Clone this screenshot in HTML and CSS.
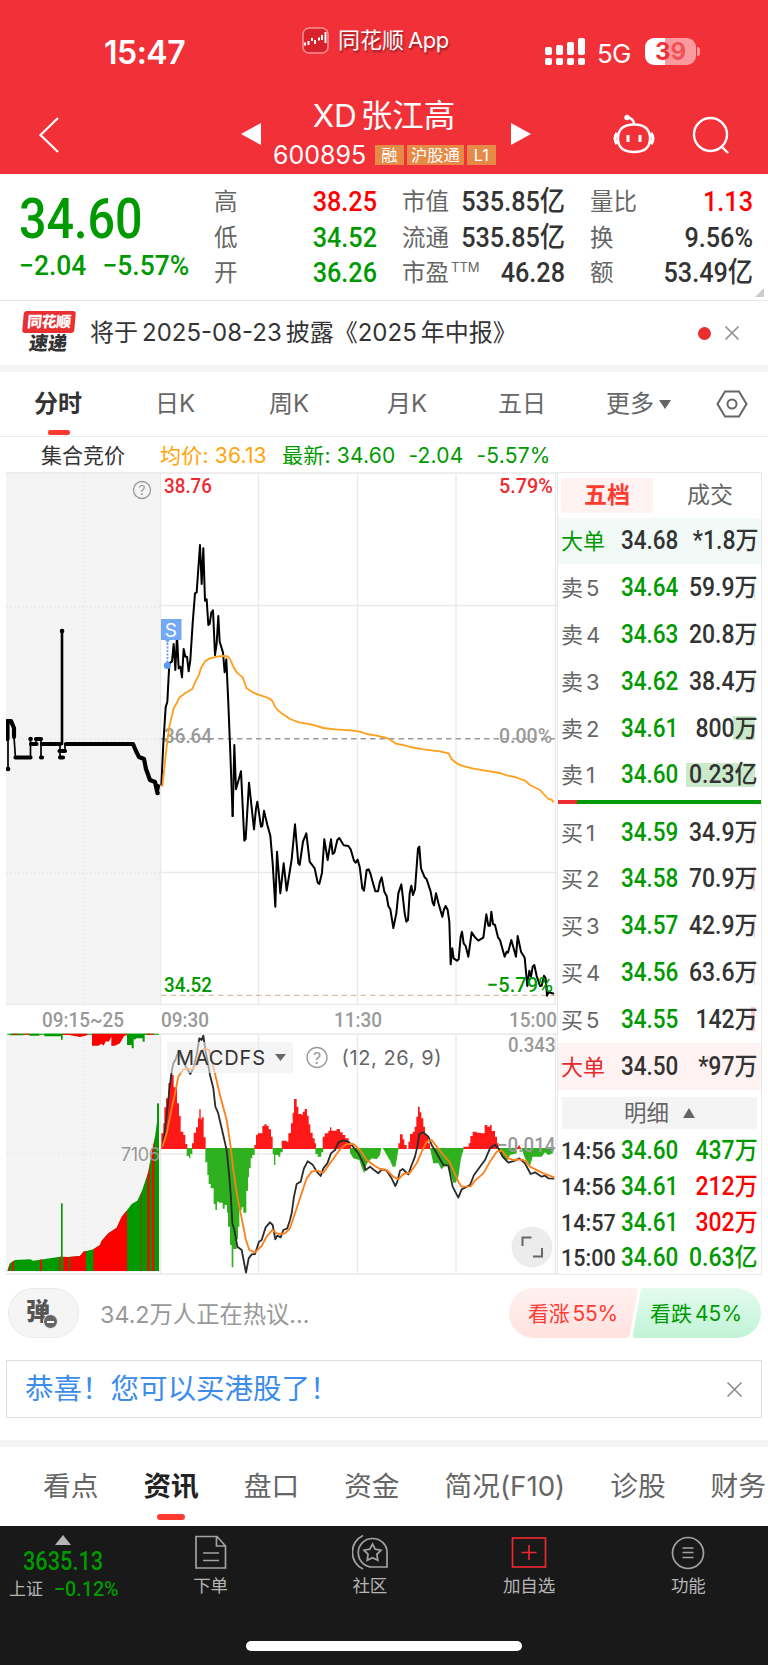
FILE: index.html
```html
<!DOCTYPE html>
<html lang="zh-CN">
<head>
    <meta charset="UTF-8">
    <meta name="viewport" content="width=device-width, initial-scale=1.0">
    <title>XD张江高 600895</title>
    <link rel="stylesheet" href="styles.css">
</head>
<body>
    <!-- Header -->
    <header class="header">
        <div class="status-bar">
            <span class="clock">15:47</span>
            <div class="app-name">
                <svg width="27" height="27" viewBox="0 0 27 27">
                    <rect x="1" y="1" width="25" height="25" rx="6" fill="#d8212a" stroke="#f98e92" stroke-width="1.6"/>
                    <path d="M3 15.500v3M6.500 14v4M10 11v3M13 13v4M17 10.500v3M20 8v5M23.500 5v11" stroke="#fff" stroke-width="2"/>
                </svg>
                <span>同花顺<i>App</i></span>
            </div>
            <div class="phone-state">
                <svg width="40" height="28" viewBox="0 0 40 28" fill="#fff">
                    <rect x="0" y="9" width="7" height="8" rx="2"/><rect x="11" y="7" width="7" height="10" rx="2"/>
                    <rect x="22" y="4" width="7" height="13" rx="2"/><rect x="33" y="0" width="7" height="17" rx="2"/>
                    <rect x="0" y="20" width="7" height="7" rx="2"/><rect x="11" y="20" width="7" height="7" rx="2"/>
                    <rect x="22" y="20" width="7" height="7" rx="2"/><rect x="33" y="20" width="7" height="7" rx="2"/>
                </svg>
                <span class="net">5G</span>
                <div class="battery"><b>3</b><b class="low">9</b></div>
                <i class="battery-tip"></i>
            </div>
        </div>
        <div class="title-bar">
            <svg class="back" width="22" height="38" viewBox="0 0 22 38" fill="none" stroke="#fff" stroke-width="2.2"><path d="M20 2L2.500 19L20 36"/></svg>
            <svg class="prev" width="20" height="22"><path d="M0 11L20 0V22z" fill="#fff"/></svg>
            <div class="stock">
                <h1><i>XD</i>张江高</h1>
                <div class="code-row">
                    <span class="code">600895</span>
                    <span class="tag">融</span><span class="tag">沪股通</span><span class="tag">L1</span>
                </div>
            </div>
            <svg class="next" width="20" height="22"><path d="M20 11L0 0V22z" fill="#fff"/></svg>
            <svg class="robot" width="42" height="40" viewBox="0 0 42 40" fill="none" stroke="#fff" stroke-width="2.4">
                <path d="M21 10.500C31 10.500 37 15 37 24.500S31 38 21 38S5 34 5 24.500S11 10.500 21 10.500z"/>
                <path d="M21 10.500C21 6 18.500 4 14 3.500"/><circle cx="14" cy="3.500" r="1.500" fill="#fff"/>
                <path d="M4 19Q0 24.500 4 30M38 19Q42 24.500 38 30M15 21v7M27 21v7" stroke-width="3"/>
            </svg>
            <svg class="search" width="38" height="38" viewBox="0 0 38 38" fill="none" stroke="#fff" stroke-width="2.4"><circle cx="18.500" cy="18.500" r="16.500"/><path d="M29 30L36 37"/></svg>
        </div>
    </header>

    <!-- Quote summary -->
    <section class="quote">
        <div class="last">
            <div class="price num">34.60</div>
            <div class="change num"><span>−2.04</span><span>−5.57%</span></div>
        </div>
        <dl><dt>高</dt><dd class="num up">38.25</dd><dt>低</dt><dd class="num down">34.52</dd><dt>开</dt><dd class="num down">36.26</dd></dl>
        <dl><dt>市值</dt><dd class="num">535.85亿</dd><dt>流通</dt><dd class="num">535.85亿</dd><dt>市盈<sup>TTM</sup></dt><dd class="num">46.28</dd></dl>
        <dl><dt>量比</dt><dd class="num up">1.13</dd><dt>换</dt><dd class="num">9.56%</dd><dt>额</dt><dd class="num">53.49亿</dd></dl>
        <i class="corner"></i>
    </section>

    <section class="notice">
        <div class="express"><span class="express-top">同花顺</span><span class="express-bottom">速递</span></div>
        <p>将于<i>2025-08-23</i>披露《<i>2025</i>年中报》</p>
        <i class="dot"></i>
        <svg width="14" height="14" viewBox="0 0 14 14" stroke="#999" stroke-width="1.700"><path d="M.5 .5L13.500 13.500M13.500 .5L.5 13.500"/></svg>
    </section>

    <nav class="period">
        <span class="t1 active">分时</span><span class="t2">日K</span><span class="t3">周K</span><span class="t4">月K</span><span class="t5">五日</span><span class="t6">更多</span>
        <svg class="caret" width="12" height="9"><path d="M0 0H12L6 9z" fill="#666"/></svg>
        <svg class="hexagon" width="32" height="28" viewBox="0 0 32 28" fill="none" stroke="#666" stroke-width="2"><path d="M9 1.500H23L30.500 14L23 26.500H9L1.500 14z"/><circle cx="16" cy="14" r="4.500"/></svg>
    </nav>

    <div class="legend">
        <span class="auction">集合竞价</span><span class="avg">均价: 36.13</span><span class="now">最新: 34.60</span><span class="now">-2.04</span><span class="now">-5.57%</span>
    </div>

    <main class="board">
        <div class="charts">
            <!-- Intraday price -->
            <svg class="price-chart" width="551" height="533" viewBox="6 472 551 533">
                <rect x="6" y="472" width="154" height="533" fill="#f4f4f4"/>
                <path d="M84 473V1005M6 607H160M6 739H160M6 873H160" stroke="#e9e9e9" stroke-width="1.500" stroke-dasharray="2 2"/>
                <path d="M6 473H557M160.500 473V1005M258.500 473V1005M357.500 473V1005M456 473V1005M555.500 473V1005M160 605.500H557M160 872.500H557M6 1004.500H557" stroke="#e9e9e9" stroke-width="1.300"/>
                <path d="M161 738.700H555" stroke="#999" stroke-width="1.500" stroke-dasharray="5.500 4"/>
                <path d="M161 995.300H555" stroke="#dcbd9c" stroke-width="1.200" stroke-dasharray="5.500 4"/>
                <g class="label" font-size="21">
                    <text x="164" y="493" fill="#ee2b33" textLength="48" lengthAdjust="spacingAndGlyphs">38.76</text>
                    <text x="499" y="493" fill="#ee2b33" textLength="54" lengthAdjust="spacingAndGlyphs">5.79%</text>
                    <text x="164" y="742.500" fill="#999" textLength="48" lengthAdjust="spacingAndGlyphs">36.64</text>
                    <text x="499" y="742.500" fill="#999" textLength="53" lengthAdjust="spacingAndGlyphs">0.00%</text>
                </g>
                <g fill="none" stroke="#000" stroke-linejoin="round" stroke-linecap="round">
                    <path d="M8 769V721L14 727V737L15.500 758M30.500 758V738M36 744V739M41 739V758M60 744V758M65 751V744" stroke-width="1.700"/>
                    <path d="M62 631V744" stroke-width="2.600"/>
                    <path d="M7.500 739V721H11L14 728V737M15.500 757.500H30.500M31 744H36.500M36 739H41M41 757.500H42M42 744H60M59.500 751H65M60 757.500H63M66 744H133L136 751L139 757L144 759L146 769L150 780L155 782L157 791L158 786" stroke-width="4.200"/>
                    <path d="M8 769h.1M62 631h.1M157.500 793h.1M30.500 739h.1" stroke-width="4.500"/>
                </g>
                <g fill="none" stroke="#000" stroke-width="6" stroke-linejoin="round">
                    <polyline transform="translate(0 470) scale(.33333)" points="484,947 490,820 497,712 502,695 508,580 516,574 521,522 526,600 531,497 536,595 541,590 546,622 551,537 556,560 561,560 566,604 571,570 578,460 585,370 590,367 600,225 605,342 610,235 615,392 620,388 625,465 629,462 634,427 639,421 645,555 650,520 655,438 659,515 669,548 674,607 679,568 685,700 691,850 698,1040"/>
                    <polyline transform="translate(150 700) scale(.33333)" points="248,350 253,135 258,268 273,214 283,422 287,417 297,248 312,388 318,325 322,305 333,380 337,378 342,332 352,375 361,407 368,490 376,620 381,455 391,580 401,490 410,572 420,510 425,478 435,373 445,490 449,495 459,425 469,400 479,485 494,505 503,548 508,552 516,518 523,418 533,480 543,418 548,462 553,458 562,420 568,414 581,436 595,438 602,448 612,482 617,488 623,479 629,500 637,565 642,572 650,510 656,508 661,520 667,542 676,574 684,574 690,545 695,532 703,575 710,588 715,618 721,628 730,684 739,640 745,580 754,553 759,595 764,640 769,665 774,660 779,580 784,557 789,585 795,568 804,445 808,440 813,505 824,532 830,538 842,575 848,608 852,616 858,580 866,612 877,650 882,628 887,618 893,630 898,665 902,793 907,745 911,775 921,782 926,778 932,710 936,695 941,730 947,738 955,770 965,697 975,712 985,722 1000,713 1009,643 1015,677 1020,677 1024,635 1029,672 1035,675 1044,712 1050,720 1064,770 1070,755 1074,758 1084,720 1098,770 1103,708 1113,755 1124,773 1132,858 1138,812 1143,830 1148,800 1153,795 1160,828 1170,858 1175,857 1182,827 1187,835 1191,887 1196,877 1212,881"/>
                </g>
                <g fill="none" stroke="#ff9f1c" stroke-width="5.500" stroke-linejoin="round">
                    <polyline transform="translate(0 470) scale(.33333)" points="487,950 500,830 508,770 521,715 530,700 537,684 555,670 577,657 586,635 596,617 604,592 616,573 630,565 650,560 668,558 683,559 690,567 700,590 710,607 728,622 740,655 760,668 775,674 800,682 812,688 818,695 828,715"/>
                    <polyline transform="translate(150 700) scale(.33333)" points="378,25 395,40 420,57 447,67 487,74 520,84 555,88 600,91 630,95 650,102 680,107 710,114 722,120 738,131 765,136 780,141 820,148 870,154 896,160 905,178 920,190 935,197 970,206 1000,211 1050,219 1070,226 1095,231 1125,242 1140,255 1170,270 1195,297 1205,299 1211,307"/>
                </g>
                <g class="label" font-size="21" fill="#009a00">
                    <text x="164" y="992" textLength="48" lengthAdjust="spacingAndGlyphs">34.52</text>
                    <text x="487" y="992" textLength="66" lengthAdjust="spacingAndGlyphs">−5.79%</text>
                </g>
                <g class="sans">
                    <circle cx="142" cy="490" r="8.500" fill="none" stroke="#999" stroke-width="1.300"/>
                    <text x="142" y="495" font-size="13.500" fill="#999" text-anchor="middle">?</text>
                    <path d="M161 619H181.500V640H170L167.500 643L165 640H161z" fill="#73a9f3"/>
                    <path d="M167.500 643V662" stroke="#5a9bf4" stroke-width="1.800" stroke-dasharray="2 1.500"/>
                    <circle cx="167.300" cy="665.500" r="3.500" fill="#5a9bf4"/>
                    <text x="170.800" y="636.500" font-size="19" fill="#fff" text-anchor="middle">S</text>
                </g>
            </svg>
            <div class="times"><span class="pre">09:15~25</span><span class="open">09:30</span><span class="noon">11:30</span><span class="end">15:00</span></div>
            <!-- Auction volume and MACD -->
            <svg class="macd-chart" width="551" height="242" viewBox="6 1033 551 242">
                <rect x="6" y="1033" width="154" height="239" fill="#f4f4f4"/>
                <path d="M84 1034V1271M6 1153.500H160" stroke="#e9e9e9" stroke-width="1.500" stroke-dasharray="2 2"/>
                <path d="M160 1034H557M160.500 1034V1274M258.500 1034V1274M357.500 1034V1274M456 1034V1274M555.500 1034V1274M160 1154H557M6 1274H557" stroke="#e9e9e9" stroke-width="1.300"/>
                <g transform="translate(0 1000) scale(.33333)">
                    <clipPath id="volume"><path d="M22 813L30 790L45 780L90 778L100 782L180 770L205 771L240 768L250 755L280 748L300 735L305 722L325 700L350 683L365 650L380 632L395 612L412 602L425 575L435 545L445 515L455 460L465 410L471 365V310H477V813z"/></clipPath>
                    <g clip-path="url(#volume)">
                        <rect x="20" y="300" width="460" height="520" fill="#009a00"/>
                        <path d="M36 300h5v520h-5zM120 300h6v520h-6zM178 300h4v520h-4zM190 300h15v520h-15zM211 300h47v520h-47zM280 300h101v520h-101zM442 300h7v520h-7zM456 300h7v520h-7z" fill="#fe0000"/>
                        <path d="M205 300h6v520h-6zM421 300h4v520h-4zM22 300h8v520h-8z" fill="#7a4a00"/>
                    </g>
                    <path d="M183 610H188V813H183z" fill="#009a00"/>
                    <path d="M22 101H477V104H22z" fill="#009a00"/>
                    <path d="M30 101h40v5h-40zM88 101h30v6h-30zM133 101h50v8h-50zM183 101h5v18h-5zM381 101V135H395V145H401V118H408V115H428V125H434V104H450V101z" fill="#009a00"/>
                    <path d="M38 101h15v3h-15zM70 101h18v3h-18zM188 101h25v4h-25zM210 101H262V106L240 111L225 108L210 106zM276 101H381V105L372 108L360 130L345 137H334V110L326 125L318 124L310 137L305 131L295 137H276zM440 101h22v3h-22z" fill="#fe0000"/>
                    <g fill="#ff1818">
                        <path d="M484 447V400H490V370H493V322H498V295H505V250H511V225H521V222V262H531V310H537V348H542V395H550V405H556V432H562V447zM576 447V430H581V398H588V382H594V355H598V328H602V358H605V352H611V412H617V447zM763 447V435H768V405H773V400H787V378H793V373H800V378H806V388H813V410H818V447zM845 447V422H860V425H865V400H870V398H873V370H878V338H882V297H890V320H895V342H905V345H908V335H914V327H921V347H926V373H931V398H938V415H944V430H948V447zM968 447V410H974V400H985V392H990V382H994V392H1010V387H1020V397H1028V405H1036V415H1046V430H1053V447zM1195 447V430H1200V403H1208V418H1213V435H1220V447zM1225 447V425H1230V402H1238V395H1244V380H1249V350H1254V320H1259V337H1264V355H1270V380H1275V405H1284V430H1290V447zM1390 447V440H1406V430H1411V408H1418V395H1430V398H1443V400H1454V375H1462V380H1470V375H1475V393H1485V410H1491V430H1496V447zM1550 447L1557 434L1564 447z"/>
                    </g>
                    <g fill="#2fb01f">
                        <path d="M560 444V468H567V475H571V462H577V444zM616 444V487H622V525H626V552H632V565H641V612H646V630H651V605H657V608H668V626H674V615H681V638H684V680H690V735H695V802H700V747H710V718H714V680H718V630H725V622H730V638H739V572H744V532H747V505H752V475H757V465H764V444zM818 444V463H822V495H826V465H835V470H841V457H848V444zM946 444V462H953V470H964V457H970V444zM1050 444V458L1060 475L1078 480L1086 505L1093 520L1100 492L1115 475L1130 478L1140 465L1144 444zM1148 444L1160 464L1172 485L1178 500H1186L1190 480L1196 444zM1290 444L1300 490H1315L1324 508L1335 498H1345L1360 548H1367L1375 530L1383 475L1392 444zM1496 444L1505 470L1520 485L1530 465L1550 460V444zM1564 444L1575 475L1590 498L1598 470H1625L1635 457L1645 465L1658 460L1663 444z"/>
                    </g>
                    <polyline fill="none" stroke="#2c2c2c" stroke-width="5.500" stroke-linejoin="round" points="487,440 495,390 502,330 508,270 515,215 520,190 526,180 535,155 548,180 560,205 571,222 580,205 590,165 598,115 605,120 610,107 616,150 622,180 630,225 640,265 646,320 654,338 665,385 680,450 687,520 692,580 697,670 703,690 712,740 725,750 738,818 746,775 755,763 765,762 777,725 785,720 797,682 810,667 818,675 826,718 832,707 842,712 850,690 862,685 870,660 875,640 882,590 890,552 902,545 912,505 923,484 938,494 950,515 962,528 970,505 982,490 993,460 1005,450 1015,428 1028,421 1045,425 1055,435 1075,460 1090,490 1097,510 1110,500 1122,510 1135,520 1145,508 1160,512 1175,535 1186,558 1192,545 1200,512 1208,507 1225,523 1235,495 1245,470 1252,440 1258,402 1270,397 1285,410 1295,435 1310,460 1330,495 1345,497 1358,560 1375,593 1385,568 1410,555 1422,525 1440,500 1455,480 1470,445 1485,434 1495,445 1508,470 1525,488 1545,482 1558,475 1575,490 1592,522 1605,517 1625,530 1635,527 1645,535 1663,536"/>
                    <polyline fill="none" stroke="#ff7f1a" stroke-width="5.500" stroke-linejoin="round" points="487,440 500,400 512,340 525,280 535,230 548,210 558,205 575,209 587,195 600,155 615,145 627,150 640,200 660,285 680,360 692,440 700,510 712,590 725,655 738,720 748,750 765,757 785,738 800,710 817,690 830,700 843,702 855,700 870,685 885,640 905,580 920,535 935,515 950,512 970,518 990,490 1020,448 1040,432 1060,432 1080,450 1100,480 1125,498 1140,507 1160,510 1180,530 1195,538 1210,522 1230,518 1250,490 1265,455 1280,425 1295,420 1310,440 1330,465 1348,485 1360,510 1375,545 1385,560 1412,559 1425,542 1450,520 1470,485 1490,455 1505,452 1525,475 1540,480 1560,478 1575,482 1590,500 1630,520 1663,532"/>
                </g>
                <rect x="167" y="1042" width="126" height="31" rx="2" fill="#efefef" fill-opacity=".6"/>
                <g class="sans">
                    <text x="121" y="1161" font-size="18" fill="#999" textLength="39">7106</text>
                    <text x="176" y="1064.500" font-size="20" fill="#333" textLength="89">MACDFS</text>
                    <path d="M275 1054H286L280.500 1061z" fill="#666"/>
                    <circle cx="317" cy="1057.500" r="10" fill="none" stroke="#999" stroke-width="1.300"/>
                    <text x="317" y="1063.500" font-size="16" fill="#999" text-anchor="middle">?</text>
                    <text x="341.500" y="1064.500" font-size="20" fill="#666" textLength="100">(12, 26, 9)</text>
                </g>
                <g class="label" font-size="20.500" fill="#999">
                    <text x="508" y="1052" textLength="47.500" lengthAdjust="spacingAndGlyphs">0.343</text>
                    <text x="497" y="1152" textLength="58.500" lengthAdjust="spacingAndGlyphs">−0.014</text>
                </g>
                <circle cx="532" cy="1247" r="20.500" fill="#ececec"/>
                <path d="M522.500 1246V1237.500H531.500M533 1256.500H542V1248" fill="none" stroke="#666" stroke-width="2"/>
            </svg>
        </div>

        <!-- Order book -->
        <aside class="book">
            <div class="book-tabs"><span class="on">五档</span><span>成交</span></div>
            <div class="row big sell"><span>大单</span><b class="num">34.68</b><b class="num vol">*1.8万</b></div>
            <div class="row s1"><span>卖5</span><b class="num">34.64</b><b class="num vol">59.9万</b></div>
            <div class="row s1"><span>卖4</span><b class="num">34.63</b><b class="num vol">20.8万</b></div>
            <div class="row s1"><span>卖3</span><b class="num">34.62</b><b class="num vol">38.4万</b></div>
            <div class="row s22"><span>卖2</span><b class="num">34.61</b><b class="num vol">800万</b></div>
            <div class="row s69"><span>卖1</span><b class="num">34.60</b><b class="num vol">0.23亿</b></div>
            <div class="ratio"></div>
            <div class="row b1"><span>买1</span><b class="num">34.59</b><b class="num vol">34.9万</b></div>
            <div class="row b2"><span>买2</span><b class="num">34.58</b><b class="num vol">70.9万</b></div>
            <div class="row b1"><span>买3</span><b class="num">34.57</b><b class="num vol">42.9万</b></div>
            <div class="row b1"><span>买4</span><b class="num">34.56</b><b class="num vol">63.6万</b></div>
            <div class="row b4"><span>买5</span><b class="num">34.55</b><b class="num vol">142万</b></div>
            <div class="row big buy"><span>大单</span><b class="num">34.50</b><b class="num vol">*97万</b></div>
            <div class="detail-head">明细<svg width="12" height="10"><path d="M0 10H12L6 0z" fill="#666"/></svg></div>
            <div class="row tick"><b class="num">14:56</b><b class="num down">34.60</b><b class="num vol down">437万</b></div>
            <div class="row tick"><b class="num">14:56</b><b class="num down">34.61</b><b class="num vol up">212万</b></div>
            <div class="row tick"><b class="num">14:57</b><b class="num down">34.61</b><b class="num vol up">302万</b></div>
            <div class="row tick"><b class="num">15:00</b><b class="num down">34.60</b><b class="num vol down">0.63亿</b></div>
        </aside>
    </main>

    <section class="talk">
        <div class="bullet">弹<i></i></div>
        <p>34.2万人正在热议...</p>
        <div class="votes">
            <svg width="252" height="50" viewBox="0 0 252 50">
                <defs>
                    <linearGradient id="rise" x2="0" y2="1"><stop stop-color="#fff1f0"/><stop offset="1" stop-color="#ffe2df"/></linearGradient>
                    <linearGradient id="fall" x2="0" y2="1"><stop stop-color="#e4fbee"/><stop offset="1" stop-color="#c0f3d6"/></linearGradient>
                </defs>
                <path d="M25 0H125Q129 0 128.500 4L121 46Q120 50 116 50H25A25 25 0 0 1 25 0z" fill="url(#rise)"/>
                <path d="M136 0H227A25 25 0 0 1 227 50H127Q123 50 124 46L131.500 4Q132 0 136 0z" fill="url(#fall)"/>
                <text x="19" y="33" font-size="21" fill="#ff3b35" textLength="90">看涨<tspan dx="3">55%</tspan></text>
                <text x="141" y="33" font-size="21" fill="#009a00" textLength="92">看跌<tspan dx="3">45%</tspan></text>
            </svg>
        </div>
    </section>

    <section class="promo">
        <span>恭喜！您可以买港股了！</span>
        <svg width="15" height="15" viewBox="0 0 15 15" stroke="#888" stroke-width="1.500"><path d="M.5 .5L14.500 14.500M14.500 .5L.5 14.500"/></svg>
    </section>

    <nav class="sections">
        <span>看点</span><span class="active">资讯</span><span>盘口</span><span>资金</span><span>简况(F10)</span><span>诊股</span><span>财务</span>
    </nav>

    <footer class="bottom">
        <div class="menu">
            <div class="index">
                <svg width="16" height="10"><path d="M0 10H16L8 0z" fill="#b5b5b5"/></svg>
                <div class="num points">3635.13</div>
                <div class="index-row"><span>上证</span><b class="num">−0.12%</b></div>
            </div>
            <div class="item">
                <svg width="36" height="36" viewBox="0 0 36 36" fill="none" stroke="#a2a2a2" stroke-width="1.700"><path d="M3 2.500H24L32.500 12V34H3zM23.500 2.500V12H32.500M10 19H26M10 26.500H26"/></svg>
                下单
            </div>
            <div class="item">
                <svg width="36" height="36" viewBox="0 0 36 36" fill="none" stroke="#a2a2a2" stroke-width="1.700"><path d="M20.500 4.500C29 4.500 35 11 35 18V33H20.500A14.200 14.200 0 0 1 20.500 4.500z"/><path d="M11 1.500A18.500 18.500 0 0 0 11 35"/><path d="M20.500 10l2.700 5.200 5.800 1-4.100 4.200.9 5.900-5.300-2.600-5.300 2.600.9-5.900-4.100-4.200 5.800-1z"/></svg>
                社区
            </div>
            <div class="item">
                <svg width="36" height="36" viewBox="0 0 36 36" fill="none" stroke="#e8272f" stroke-width="1.700"><rect x="1.500" y="4" width="33" height="29"/><path d="M18 11V26M10.500 18.500H25.500"/></svg>
                加自选
            </div>
            <div class="item">
                <svg width="36" height="36" viewBox="0 0 36 36" fill="none" stroke="#a2a2a2" stroke-width="1.700"><circle cx="18" cy="19" r="15.500"/><path d="M12.500 14H23.500M12.500 18.500H23.500M12.500 23.500H23.500"/></svg>
                功能
            </div>
        </div>
        <div class="home-bar"></div>
    </footer>
</body>
</html>
```
FILE: styles.css
```css
* {
    box-sizing: border-box;
}
body {
    margin: 0;
    width: 768px;
    height: 1665px;
    overflow: hidden;
    background-color: #fff;
    color: #333;
    font-family: Inter, "Noto Sans CJK SC", sans-serif;
}
h1, p, dl, dd {
    margin: 0;
}
i {
    font-style: normal;
}
svg {
    display: block;
    flex: none;
}
/* narrow numerals */
.num {
    font-family: Roboto, "Noto Sans CJK SC", sans-serif;
    font-weight: 500;
    white-space: nowrap;
    transform: scaleX(0.9);
    transform-origin: left;
}
.label {
    font-family: Roboto, sans-serif;
    font-weight: 500;
}
.sans {
    font-family: Inter, sans-serif;
}
.up {
    color: #fe0000 !important;
}
.down {
    color: #009a00 !important;
}

/* header */
.header {
    height: 174px;
    background-color: #f23037;
    color: #fff;
}
.status-bar {
    height: 105px;
    display: flex;
    align-items: flex-start;
}
.clock {
    width: 198px;
    margin: 34px 0 0 104px;
    font-size: 32px;
    font-weight: 600;
    line-height: 38px;
    letter-spacing: -0.5px;
}
.app-name {
    width: 243px;
    margin-top: 27px;
    display: flex;
    gap: 9px;
    font-size: 22px;
    line-height: 27px;
    text-shadow: 1px 2px 2px rgba(0, 0, 0, 0.4);
}
.app-name i {
    margin-left: 4px;
    letter-spacing: -0.5px;
}
.phone-state {
    margin-top: 38px;
    display: flex;
}
.net {
    width: 46px;
    margin: 2px 0 0 12px;
    font-size: 26px;
    line-height: 27px;
    letter-spacing: -0.8px;
}
.battery {
    width: 51px;
    height: 27px;
    margin-left: 2px;
    border-radius: 9px;
    background: linear-gradient(90deg, #fff 39%, #f99a9e 39%);
    text-align: center;
    color: #f23037;
    font-size: 24px;
    line-height: 28px;
}
.battery .low {
    color: #f35158;
}
.battery-tip {
    width: 3px;
    height: 9px;
    margin: 9px 0 0 1px;
    border-radius: 0 3px 3px 0;
    background-color: #f99a9e;
}
.title-bar {
    height: 69px;
    display: flex;
}
.back {
    margin: 11px 0 0 38px;
}
.prev {
    margin: 18px 0 0 181px;
}
.stock {
    width: 250px;
    margin-top: -9px;
}
h1 {
    padding-right: 4px;
    font-size: 31.500px;
    font-weight: 400;
    line-height: 40px;
    text-align: center;
    white-space: nowrap;
}
h1 i {
    margin-right: 4px;
}
.code-row {
    display: flex;
    align-items: center;
    height: 24px;
    margin: 7px 0 0 12px;
}
.code {
    width: 102px;
    font-size: 25px;
    line-height: 24px;
}
.tag {
    min-width: 29px;
    height: 20px;
    padding: 0 4px;
    margin-right: 3px;
    background-color: #e58b47;
    font-size: 16.300px;
    line-height: 20px;
    text-align: center;
}
.next {
    margin: 18px 0 0;
}
.robot {
    margin: 9px 0 0 82px;
}
.search {
    margin: 11px 0 0 37px;
}

/* quote */
.quote {
    position: relative;
    height: 127px;
    display: flex;
    border-bottom: 1px solid #e8e8e8;
}
.last {
    flex: none;
    width: 214px;
    padding-left: 19px;
    color: #009a00;
}
.price {
    margin-top: 18px;
    font-size: 56px;
    line-height: 54px;
    transform: scaleX(0.865);
}
.change {
    display: flex;
    gap: 17px;
    margin-top: 3px;
    font-size: 28px;
    line-height: 34px;
    transform: scaleX(0.945);
}
.quote dl {
    flex: none;
    display: grid;
    grid-template-columns: 47px 116px;
    grid-auto-rows: 35.500px;
    width: 163px;
    margin: 10px 25px 0 0;
    line-height: 35px;
}
.quote dt {
    color: #666;
    font-size: 23.500px;
    white-space: nowrap;
}
.quote dd {
    font-size: 28px;
    text-align: right;
    transform-origin: right;
}
sup {
    margin-left: 2px;
    font-size: 13px;
    line-height: 0;
}
.corner {
    position: absolute;
    right: 4px;
    bottom: 3px;
    border-left: 9px solid transparent;
    border-bottom: 9px solid #ccc;
}

.notice {
    height: 71px;
    display: flex;
    align-items: center;
    padding: 0 29px 0 22px;
    border-bottom: 7px solid #f4f4f4;
}
.express {
    width: 53px;
    margin-right: 15px;
    display: flex;
    flex-direction: column;
    align-items: center;
}
.express-top {
    width: 52px;
    height: 22px;
    border-radius: 3px;
    background-color: #e92f31;
    color: #fff;
    font-size: 15px;
    font-weight: 900;
    line-height: 22px;
    text-align: center;
    letter-spacing: -0.5px;
    transform: skewX(-5deg);
}
.express-bottom {
    font-size: 19px;
    font-weight: 900;
    line-height: 22px;
    transform: skewX(-8deg);
}
.notice p {
    flex: 1;
    font-size: 24px;
    line-height: 32px;
    padding-bottom: 1px;
}
.notice p i {
    margin: 0 4px;
}
.notice p i:last-child {
    margin-left: 0;
}
.dot {
    width: 13px;
    height: 13px;
    margin-right: 14px;
    border-radius: 50%;
    background-color: #ea2d2f;
}

/* period tabs */
.period {
    height: 65px;
    display: flex;
    align-items: center;
    border-bottom: 1px solid #ebebeb;
    color: #666;
    font-size: 24px;
    line-height: 64px;
}
.t1 { width: 121px; margin-left: 34px; }
.t2 { width: 114px; }
.t3 { width: 118px; }
.t4 { width: 111px; }
.t5 { width: 108px; }
.t6 { width: 53px; }
.hexagon {
    margin-left: 45px;
}
.period .active {
    display: flex;
    flex-direction: column;
    height: 64px;
    color: #333;
    font-weight: 700;
}
.period .active::after {
    content: "";
    flex: none;
    width: 22px;
    height: 5px;
    margin: -6px 0 0 14px;
    border-radius: 2px;
    background-color: #ff3b30;
}
.legend {
    height: 35px;
    display: flex;
    padding-left: 41px;
    font-size: 21px;
    line-height: 37px;
    white-space: pre;
    letter-spacing: 0.200px;
}
.auction {
    width: 119px;
    letter-spacing: 0;
}
.avg {
    width: 122px;
    color: #ffa50a;
}
.now {
    margin-right: 13px;
    color: #009a00;
}

/* charts and book */
.board {
    display: flex;
    height: 803px;
    padding-left: 6px;
}
.charts {
    width: 551px;
}
.times {
    height: 28px;
    display: flex;
    color: #999;
    font-family: Roboto, sans-serif;
    font-size: 21px;
    font-weight: 500;
    line-height: 31px;
}
.times span {
    flex: none;
    transform: scaleX(0.900);
    transform-origin: left;
}
.pre { width: 119px; margin-left: 36px; }
.open { width: 173px; }
.noon { width: 175px; }
.book {
    width: 205px;
    border: 1px solid #e8e8e8;
}
.book-tabs {
    display: flex;
    gap: 11px;
    padding: 5px 3px 5px 3px;
    height: 44.500px;
    font-size: 23px;
    line-height: 34px;
    color: #666;
}
.book-tabs span {
    width: 92px;
    text-align: center;
    border-radius: 3px;
}
.book-tabs .on {
    background-color: #fff2f1;
    color: #ff3b30;
    font-weight: 700;
}
.row {
    height: 46.800px;
    display: flex;
    align-items: center;
    padding: 1px 3px 0 3px;
    font-size: 22px;
    line-height: 30px;
    color: #666;
    background-repeat: no-repeat;
}
.row span {
    flex: none;
    width: 60px;
    letter-spacing: 3px;
}
.row b {
    flex: none;
    width: 57px;
    font-size: 25px;
    color: #009a00;
}
.row .vol {
    width: auto;
    margin-left: auto;
    color: #333;
    font-size: 25px;
    transform: scaleX(0.920);
    transform-origin: right;
}
.row.big b {
    color: #333;
}
.row.big span {
    letter-spacing: 0;
}
.sell {
    background-color: #f1faf6;
    color: #009a00;
}
.buy {
    background-color: #fff2f2;
    color: #e9272f;
}
.s1, .s22, .s69 {
    background-image: linear-gradient(#cbeacb, #cbeacb);
    background-size: 1px 24px;
    background-position: 196px center;
}
.s22 {
    background-size: 22px 24px;
    background-position: 175px center;
}
.s69 {
    background-size: 69px 24px;
    background-position: 128px center;
}
.b1, .b2, .b4 {
    background-image: linear-gradient(#ffc9c9, #ffc9c9);
    background-size: 1px 24px;
    background-position: 196px center;
}
.b2 {
    background-size: 2px 24px;
    background-position: 195px center;
}
.b4 {
    background-size: 4px 24px;
    background-position: 193px center;
}
.ratio {
    height: 3.500px;
    margin: 2px 0 5px;
    background: linear-gradient(90deg, #ee2b33 19px, #009a00 19px);
}
.detail-head {
    height: 32px;
    margin: 7px 4px 4px;
    display: flex;
    align-items: center;
    justify-content: center;
    gap: 14px;
    background-color: #f4f4f4;
    color: #666;
    font-size: 22.500px;
    line-height: 32px;
}
.tick {
    height: 35.800px;
}
.tick b:first-child {
    width: 60px;
    color: #333;
    font-size: 24.500px;
    transform: scaleX(0.880);
}

/* talk */
.talk {
    height: 85px;
    display: flex;
    padding: 13px 7px 0 8px;
}
.bullet {
    position: relative;
    width: 71px;
    height: 50px;
    padding-left: 17px;
    border: 1px solid #ebebeb;
    border-radius: 25px;
    background-color: #f5f5f5;
    color: #555;
    font-size: 24px;
    font-weight: 900;
    line-height: 46px;
}
.bullet i {
    position: absolute;
    left: 34px;
    top: 25px;
    width: 15px;
    height: 15px;
    border: 1px solid #f5f5f5;
    border-radius: 50%;
    background: linear-gradient(#fff, #fff) center / 7px 2px no-repeat #666;
}
.talk p {
    flex: 1;
    margin-left: 21px;
    color: #999;
    font-size: 23.300px;
    line-height: 53px;
}
.promo {
    height: 58px;
    margin: 0 6px;
    display: flex;
    align-items: center;
    justify-content: space-between;
    padding: 0 19px 0 18px;
    border: 1px solid #dedede;
    color: #3c8cec;
    font-size: 28.500px;
    line-height: 56px;
}

.sections {
    height: 86px;
    margin-top: 22px;
    display: flex;
    gap: 45px;
    padding-left: 43px;
    border-top: 7px solid #f4f4f4;
    color: #666;
    font-size: 27.700px;
    line-height: 79px;
    white-space: nowrap;
    overflow: hidden;
}
.sections .active {
    display: flex;
    flex-direction: column;
    align-items: center;
    color: #222;
    font-weight: 700;
}
.sections .active::after {
    content: "";
    width: 28px;
    height: 6px;
    margin-top: -12px;
    border-radius: 3px;
    background-color: #ff3b30;
}

/* bottom bar */
.bottom {
    height: 140px;
    background-color: #191919;
    color: #b5b5b5;
}
.menu {
    height: 115px;
    display: flex;
    font-size: 17.500px;
}
.index {
    flex: none;
    width: 131px;
    padding: 9px 5px 0 0;
    display: flex;
    flex-direction: column;
    align-items: center;
    color: #009a00;
}
.points {
    margin-top: 2px;
    font-size: 25px;
    line-height: 29px;
    transform: scaleX(0.870);
    transform-origin: center;
}
.index-row {
    width: 116px;
    display: flex;
    margin-top: 1px;
    line-height: 24px;
}
.index-row span {
    width: 48px;
    margin-left: 4px;
    color: #b5b5b5;
    font-size: 17px;
}
.index-row b {
    font-size: 20.500px;
    transform: scaleX(0.960);
}
.item {
    width: 159.500px;
    padding-top: 8px;
    display: flex;
    flex-direction: column;
    align-items: center;
    line-height: 32px;
}
.home-bar {
    width: 276px;
    height: 10px;
    margin: 0 auto;
    border-radius: 5px;
    background-color: #fff;
}
```
